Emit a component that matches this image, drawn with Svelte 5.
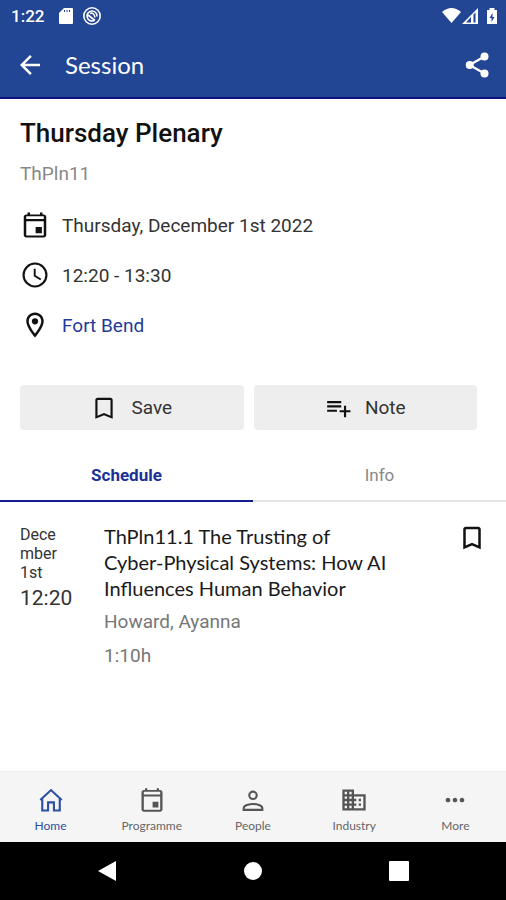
<script>
  const session = {
    title: 'Thursday Plenary',
    code: 'ThPln11',
    date: 'Thursday, December 1st 2022',
    time: '12:20 - 13:30',
    room: 'Fort Bend'
  };

  const talks = [
    {
      date: 'December 1st',
      time: '12:20',
      title: 'ThPln11.1 The Trusting of Cyber-Physical Systems: How AI Influences Human Behavior',
      author: 'Howard, Ayanna',
      duration: '1:10h'
    }
  ];

  const tabs = ['Schedule', 'Info'];
  let activeTab = $state('Schedule');

  const navItems = ['Home', 'Programme', 'People', 'Industry', 'More'];
  let activeNav = $state('Home');
</script>

{#snippet bookmark()}
  <svg class="icon" viewBox="0 0 24 24" aria-hidden="true">
    <path d="M17 3H7c-1.1 0-2 .9-2 2v16l7-3 7 3V5c0-1.1-.9-2-2-2zm0 15-5-2.2L7 18V5h10v13z" />
  </svg>
{/snippet}

{#snippet calendar()}
  <svg class="icon" viewBox="0 0 24 24" aria-hidden="true">
    <path d="M19 3.5h-1V2h-2v1.5H8V2H6v1.5H5c-1.1 0-2 .9-2 2V20c0 1.1.9 2 2 2h14c1.1 0 2-.9 2-2V5.5c0-1.1-.9-2-2-2zM19 5v2.2H5V5h14zM5 20.4V9h14v11.4H5zm7.5-6.900h5v5h-5z" />
  </svg>
{/snippet}

<div class="screen">
  <header>
    <div class="status-bar">
      <span class="clock">1:22</span>
      <svg width="16" height="18" viewBox="0 0 16 18" aria-hidden="true">
        <path d="M6 1h8a1 1 0 0 1 1 1v14a1 1 0 0 1-1 1H2a1 1 0 0 1-1-1V6z" />
        <path stroke="#224594" d="M6.5 3v2M9 3v2M11.5 3v2" />
      </svg>
      <svg width="20" height="20" viewBox="0 0 20 20" aria-hidden="true">
        <g fill="none" stroke="#fff" stroke-width="1.6">
          <circle cx="10" cy="10" r="8.2" />
          <path d="M12 14.6A5 5 0 1 1 15 10.5M6 9l7 5.5M8 7.5q4-1.5 5 4" />
        </g>
      </svg>
      <svg class="signals" width="56" height="18" viewBox="0 0 56 18" aria-hidden="true">
        <path d="M0 5q9.5-8 19 0L9.5 16z" />
        <path d="M20 17 36 1v16z" />
        <path fill="#224594" d="M29 10v5.5h-5zM31.5 7.5l2-2v10h-2z" />
        <path d="M45 3h2.5V1h5v2H55v14H45z" />
        <path fill="#224594" d="M50.5 6 47.5 11H49.5v4l3-5H50.5z" />
      </svg>
    </div>
    <div class="app-bar">
      <button aria-label="Back">
        <svg class="icon" viewBox="0 0 24 24" aria-hidden="true">
          <path d="M20 11H7.83l5.59-5.59L12 4l-8 8 8 8 1.41-1.41L7.83 13H20v-2z" />
        </svg>
      </button>
      <h1>Session</h1>
      <button aria-label="Share">
        <svg class="icon" viewBox="0 0 24 24" aria-hidden="true">
          <path d="M6 12 18 5.2M6 12l12 6.8" stroke="currentColor" stroke-width="1.8" />
          <circle cx="6.2" cy="12" r="3.2" />
          <circle cx="18" cy="5.2" r="3.2" />
          <circle cx="18" cy="18.8" r="3.2" />
        </svg>
      </button>
    </div>
  </header>

  <main>
    <section class="details">
      <h2>{session.title}</h2>
      <p class="code">{session.code}</p>
      <ul>
        <li>
          {@render calendar()}
          <span>{session.date}</span>
        </li>
        <li>
          <svg class="icon" viewBox="0 0 24 24" aria-hidden="true">
            <path d="M12 2a10 10 0 1 0 0 20 10 10 0 0 0 0-20zm0 18.3a8.3 8.3 0 1 1 0-16.6 8.3 8.3 0 0 1 0 16.6zM12.5 7H11v6l5.2 3.2.8-1.3-4.5-2.7z" />
          </svg>
          <span>{session.time}</span>
        </li>
        <li>
          <svg class="icon" viewBox="0 0 24 24" aria-hidden="true">
            <path d="M12 2C8.13 2 5 5.13 5 9c0 5.25 7 13 7 13s7-7.75 7-13c0-3.87-3.13-7-7-7zM7 9c0-2.76 2.24-5 5-5s5 2.24 5 5c0 2.88-2.88 7.19-5 9.88C9.92 16.21 7 11.85 7 9z" />
            <circle cx="12" cy="9" r="2.5" />
          </svg>
          <a href="#room">{session.room}</a>
        </li>
      </ul>
    </section>

    <div class="actions">
      <button>
        <svg viewBox="0 0 24 24" aria-hidden="true">
          <path d="M18 2.5H6c-1.1 0-2 .9-2 2V22l8-3.3L20 22V4.5c0-1.1-.9-2-2-2zm0 16.7-6-2.5-6 2.5V4.5h12v14.7z" />
        </svg>
        Save
      </button>
      <button>
        <svg viewBox="0 0 24 24" aria-hidden="true">
          <path d="M15 9.5H2v2h13v-2zm0-4H2v2h13V6zm4.500 8.500v-4h-2v4h-4v2h4v4.500h2V16h4v-2h-4zM2 15.5h9v-2H2v2z" />
        </svg>
        Note
      </button>
    </div>

    <div class="tabs" role="tablist">
      {#each tabs as tab}
        <button
          role="tab"
          aria-selected={activeTab === tab}
          class:active={activeTab === tab}
          onclick={() => (activeTab = tab)}
        >
          {tab}
        </button>
      {/each}
    </div>

    {#if activeTab === 'Schedule'}
      {#each talks as talk}
        <article class="talk">
          <div class="when">
            <div class="day">{talk.date}</div>
            <div class="start">{talk.time}</div>
          </div>
          <div class="info">
            <h3>{talk.title}</h3>
            <p>{talk.author}</p>
            <p>{talk.duration}</p>
          </div>
          <button aria-label="Save talk">
            {@render bookmark()}
          </button>
        </article>
      {/each}
    {/if}
  </main>

  <nav class="bottom-nav">
    {#each navItems as item}
      <button class:active={activeNav === item} onclick={() => (activeNav = item)}>
        {#if item === 'Programme'}
          {@render calendar()}
        {:else}
          <svg class="icon" viewBox="0 0 24 24" aria-hidden="true">
            {#if item === 'Home'}
              <path fill="none" stroke="currentColor" stroke-width="1.8" d="M2.8 12 12 3.5l9.2 8.5M4.5 10.5v10.500h5v-7h5v7h5v-10.500" />
            {:else if item === 'People'}
              <path fill="none" stroke="currentColor" stroke-width="1.8" d="M12 4.8a3.2 3.2 0 1 1 0 6.4 3.2 3.2 0 0 1 0-6.4zM4 20.500v-1.400c0-2.400 5-3.700 8-3.700s8 1.300 8 3.700v1.400z" />
            {:else if item === 'Industry'}
              <path d="M12 7V3H2v18h20V7H12zM6 19H4v-2h2v2zm0-4H4v-2h2v2zm0-4H4V9h2v2zm0-4H4V5h2v2zm4 12H8v-2h2v2zm0-4H8v-2h2v2zm0-4H8V9h2v2zm0-4H8V5h2v2zm10 12h-8v-2h2v-2h-2v-2h2v-2h-2V9h8v10zm-2-8h-2v2h2v-2zm0 4h-2v2h2v-2z" />
            {:else}
              <path d="M6 10c-1.1 0-2 .9-2 2s.9 2 2 2 2-.9 2-2-.9-2-2-2zm12 0c-1.1 0-2 .9-2 2s.9 2 2 2 2-.9 2-2-.9-2-2-2zm-6 0c-1.1 0-2 .9-2 2s.9 2 2 2 2-.9 2-2-.9-2-2-2z" />
            {/if}
          </svg>
        {/if}
        {item}
      </button>
    {/each}
  </nav>

  <div class="system-nav">
    <button aria-label="System back">
      <svg width="20" height="22" viewBox="0 0 20 22"><path d="M1 11 19 1v20z" /></svg>
    </button>
    <button aria-label="System home">
      <svg width="20" height="20" viewBox="0 0 20 20"><circle cx="10" cy="10" r="9" /></svg>
    </button>
    <button aria-label="Recent apps">
      <svg width="20" height="20" viewBox="0 0 20 20"><rect width="20" height="20" rx="1" /></svg>
    </button>
  </div>
</div>

<style>
  :global(body) {
    margin: 0;
    background: #fff;
  }

  .screen {
    display: flex;
    flex-direction: column;
    min-height: 100vh;
    font-family: Roboto, "Liberation Sans", sans-serif;
    font-size: 19px;
    color: #333;
  }

  h1, h2, h3, p, ul {
    margin: 0;
    padding: 0;
    font-weight: 400;
  }

  button {
    padding: 0;
    border: none;
    background: none;
    font: inherit;
    color: inherit;
    cursor: pointer;
  }

  svg {
    display: block;
    flex: none;
    fill: currentColor;
  }

  .icon {
    width: 30px;
    height: 30px;
  }

  header {
    background: #224594;
    border-bottom: 2px solid #0c1280;
    color: #fff;
  }

  .status-bar {
    display: flex;
    align-items: center;
    gap: 8px;
    height: 32px;
    padding: 0 8px 0 11px;
  }

  .clock {
    margin-right: 6px;
    font-size: 17px;
    font-weight: 500;
  }

  .signals {
    margin-left: auto;
  }

  .app-bar {
    display: flex;
    align-items: center;
    height: 65px;
    padding: 0 14px 0 15px;
  }

  h1 {
    flex: 1;
    margin-left: 20px;
    font-family: Lato, sans-serif;
    font-size: 24px;
  }

  main {
    flex: 1;
  }

  .details {
    padding: 16px 20px 0;
  }

  h2 {
    font-size: 26px;
    font-weight: 500;
    line-height: 36px;
    color: #111;
  }

  .code {
    margin-top: 11px;
    line-height: 24px;
    color: #888;
  }

  ul {
    margin-top: 14px;
    list-style: none;
  }

  li {
    display: flex;
    align-items: center;
    gap: 12px;
    height: 50px;
  }

  li svg,
  .actions svg,
  .talk svg {
    color: #111;
  }

  a {
    color: #24399a;
    text-decoration: none;
  }

  .actions {
    display: flex;
    gap: 10px;
    margin: 35px 29px 0 20px;
  }

  .actions button {
    display: flex;
    flex: 1;
    align-items: center;
    justify-content: center;
    gap: 14px;
    height: 45px;
    border-radius: 4px;
    background: #eee;
  }

  .actions svg {
    width: 26px;
    height: 26px;
  }

  .tabs {
    display: flex;
    margin-top: 20px;
  }

  .tabs button {
    flex: 1;
    height: 52px;
    border-bottom: 2px solid #e4e4e4;
    font-size: 17px;
    color: #888;
  }

  .tabs .active {
    border-color: #101f8c;
    font-weight: 700;
    color: #1b2f96;
  }

  .talk {
    display: flex;
    align-items: flex-start;
    padding: 21px 19px 0 20px;
  }

  .when {
    width: 42px;
    margin-right: 42px;
  }

  .day {
    margin-top: 2px;
    font-size: 16px;
    line-height: 19px;
    word-break: break-word;
  }

  .start {
    font-size: 21px;
    line-height: 32px;
  }

  .info {
    flex: 1;
    padding-right: 66px;
  }

  h3 {
    font-family: Lato, sans-serif;
    font-size: 20px;
    line-height: 26px;
    color: #1a1a1a;
  }

  .info p {
    margin-top: 8px;
    line-height: 26px;
    color: #777;
  }

  .bottom-nav {
    display: flex;
    height: 71px;
    padding-top: 4px;
    background: #f5f5f5;
    border-top: 1px solid #eee;
    box-sizing: border-box;
  }

  .bottom-nav button {
    display: flex;
    flex: 1;
    flex-direction: column;
    align-items: center;
    justify-content: center;
    gap: 4px;
    font-family: Lato, sans-serif;
    font-size: 12px;
    color: #666;
  }

  .bottom-nav svg {
    width: 28px;
    height: 28px;
    color: #555;
  }

  .bottom-nav .active,
  .bottom-nav .active svg {
    color: #2c4fa3;
  }

  .system-nav {
    display: flex;
    align-items: center;
    justify-content: center;
    gap: 126px;
    height: 58px;
    background: #000;
    color: #fff;
  }
</style>
